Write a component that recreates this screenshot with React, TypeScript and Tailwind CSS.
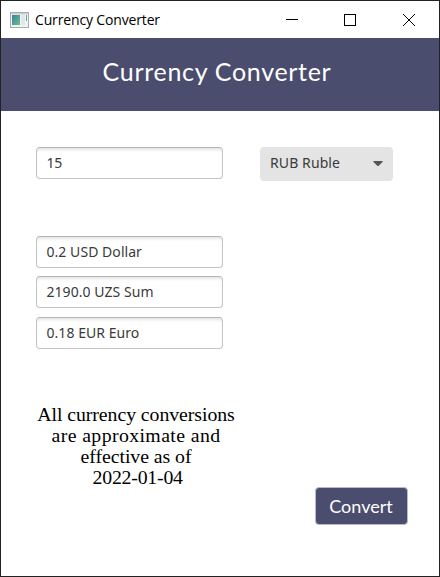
const fieldClass =
  "flex h-8 w-[187px] items-center rounded-[4px] border border-[#c4c4c4] border-t-[#b5b5b5] bg-white pb-px pl-[9.5px] text-[14px] text-[#3a3a3a] shadow-[inset_0_3px_3px_-1px_#e6e6e6]";

function Field({ value, spacing }: { value: string; spacing: string }) {
  return (
    <div className={fieldClass}>
      <span className={`whitespace-nowrap ${spacing}`}>{value}</span>
    </div>
  );
}

function AppIcon() {
  return (
    <svg width="19" height="16" viewBox="0 0 19 16">
      <defs>
        <linearGradient id="pane" x1="0" y1="0" x2="1" y2="1">
          <stop offset="0" stopColor="#397f9f" />
          <stop offset="1" stopColor="#6cc18c" />
        </linearGradient>
      </defs>
      <rect x="0.5" y="0.5" width="18" height="15" fill="#f2f2f2" stroke="#a7adb3" />
      <rect x="1" y="1" width="17" height="1.5" fill="#c9cdd1" />
      <rect x="2" y="3" width="8" height="10" fill="url(#pane)" />
      <rect x="11" y="3" width="4" height="10" fill="#e4e5e8" />
      <rect x="16" y="3" width="1" height="6" fill="#5fae91" />
    </svg>
  );
}

export default function App() {
  return (
    <div className="flex h-[577px] w-[440px] flex-col border border-[#222222] bg-white font-['Noto_Sans','Open_Sans',sans-serif]">
      <div className="flex h-[37px] shrink-0 items-center pl-[9px]">
        <AppIcon />
        <span className="ml-[6px] whitespace-nowrap font-['Open_Sans',sans-serif] text-[14px] tracking-[-0.15px] text-black">
          Currency Converter
        </span>
        <svg className="ml-auto mr-[24px]" width="130" height="12" viewBox="0 0 130 12" shapeRendering="crispEdges">
          <path d="M1 5.5H13" stroke="#000" />
          <rect x="59.5" y="0.5" width="11" height="11" fill="none" stroke="#000" />
          <path d="M118 0L130 12M130 0L118 12" stroke="#000" shapeRendering="auto" />
        </svg>
      </div>

      <header className="flex h-[73px] shrink-0 items-start justify-center bg-[#4a4d6d] pr-[6px] pt-4">
        <h1 className="whitespace-nowrap font-['Lato',sans-serif] text-[25px] leading-[34px] tracking-[0.7px] text-white">
          Currency Converter
        </h1>
      </header>

      <main className="flex flex-1 flex-col pl-[35px]">
        <div className="mt-9 flex items-start gap-[37px]">
          <Field value="15" spacing="tracking-[-0.2px]" />
          <button className="flex h-[34px] w-[133px] items-center justify-between rounded-[4px] bg-[#e4e4e4] pb-[2px] pl-[10px] pr-[10px] text-[14px] text-[#3a3a3a]">
            <span className="mb-px whitespace-nowrap tracking-[0.1px]">RUB Ruble</span>
            <svg width="10" height="5" viewBox="0 0 10 5">
              <path d="M0.5 0H9.5Q10 .5 9.5 1L5.5 5H4.5L.5 1Q0 .5 .5 0Z" fill="#555" />
            </svg>
          </button>
        </div>

        <div className="mt-[54px] flex flex-col pt-[0.5px]">
          <Field value="0.2 USD Dollar" spacing="tracking-[0.05px]" />
          <div className="mt-2">
            <Field value="2190.0 UZS Sum" spacing="tracking-[0.05px]" />
          </div>
          <div className="mt-[9px]">
            <Field value="0.18 EUR Euro" spacing="tracking-[0.05px]" />
          </div>
        </div>

        <div className="mt-[56.5px] flex w-[200px] origin-center scale-x-[1.1] flex-col items-center font-['Liberation_Serif',serif] text-[18px] leading-[21px] text-black">
          <span className="whitespace-nowrap tracking-[-0.06px]">All currency conversions</span>
          <span className="whitespace-nowrap tracking-[0.35px]">are approximate and</span>
          <span className="whitespace-nowrap tracking-[-0.05px]">effective as of</span>
          <span className="ml-[3px] whitespace-nowrap tracking-[-0.2px]">2022-01-04</span>
        </div>

        <button className="mr-[31px] mt-[-2px] flex h-[38px] w-[93px] items-center justify-center self-end rounded-[4px] border border-[#b9bacb] bg-[#4a4d6d] pr-px font-['Lato',sans-serif] text-[18px] text-white">
          Convert
        </button>
      </main>
    </div>
  );
}
